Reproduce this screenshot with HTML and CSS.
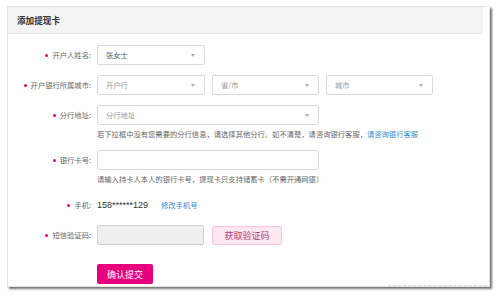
FILE: index.html
```html
<!DOCTYPE html>
<html lang="zh">
<head>
<meta charset="utf-8">
<title>添加提现卡</title>
<link rel="stylesheet" href="styles.css">
</head>
<body>
<div class="page">
  <div class="card">
    <div class="card-head">添加提现卡</div>
    <form class="form">
      <div class="row">
        <label class="label"><span class="req"></span>开户人姓名:</label>
        <div class="ctrl">
          <div class="select w108"><span class="val">张女士</span><span class="arrow"></span></div>
        </div>
      </div>
      <div class="row">
        <label class="label"><span class="req"></span>开户银行所属城市:</label>
        <div class="ctrl inline">
          <div class="select w108"><span class="ph">开户行</span><span class="arrow"></span></div>
          <div class="select w107"><span class="ph">省/市</span><span class="arrow"></span></div>
          <div class="select w107"><span class="ph">城市</span><span class="arrow"></span></div>
        </div>
      </div>
      <div class="row">
        <label class="label"><span class="req"></span>分行地址:</label>
        <div class="ctrl">
          <div class="select w222"><span class="ph">分行地址</span><span class="arrow"></span></div>
          <p class="hint">若下拉框中没有您需要的分行信息，请选择其他分行。如不清楚，请咨询银行客服，<a class="link">请咨询银行客服</a></p>
        </div>
      </div>
      <div class="row">
        <label class="label"><span class="req"></span>银行卡号:</label>
        <div class="ctrl">
          <div class="input w222"></div>
          <p class="hint">请输入持卡人本人的银行卡号，提现卡只支持储蓄卡（不需开通网银）</p>
        </div>
      </div>
      <div class="row">
        <label class="label"><span class="req"></span>手机:</label>
        <div class="ctrl inline">
          <span class="phone">158******129</span>
          <a class="link change">修改手机号</a>
        </div>
      </div>
      <div class="row">
        <label class="label"><span class="req"></span>短信验证码:</label>
        <div class="ctrl inline">
          <div class="input w107 disabled"></div>
          <button type="button" class="code-btn">获取验证码</button>
        </div>
      </div>
      <div class="row submit-row">
        <div class="label"></div>
        <div class="ctrl">
          <button type="button" class="submit">确认提交</button>
        </div>
      </div>
    </form>
    <div class="dash"></div>
  </div>
</div>
</body>
</html>
```

FILE: styles.css
```css
* { box-sizing: border-box; }
html, body { margin: 0; padding: 0; background: #fff; }
body {
  font-family: "Noto Sans CJK SC", "Liberation Sans", sans-serif;
  color: #555;
  width: 500px;
  height: 298px;
  overflow: hidden;
}
.page { padding: 6px 0 0 7px; }
.card {
  position: relative;
  width: 483px;
  height: 281px;
  border: 1px solid #e2e2e2;
  background: #fff;
  box-shadow: 2px 2px 2px rgba(0, 0, 0, 0.55);
}
.card-head {
  height: 27px;
  margin-right: 6px;
  background: #f3f3f3;
  border-bottom: 1px solid #e9e9e9;
  padding-left: 9px;
  font-size: 8.6px;
  font-weight: bold;
  color: #333;
  line-height: 26px;
}
.form { padding-top: 11px; }
.row { display: flex; align-items: flex-start; margin-bottom: 10px; }
.label {
  width: 83px;
  flex: none;
  height: 20px;
  line-height: 21px;
  text-align: right;
  font-size: 7.3px;
  color: #666;
  margin-right: 6px;
  white-space: nowrap;
}
.req {
  display: inline-block;
  width: 3px;
  height: 3px;
  border-radius: 50%;
  background: #e6007e;
  vertical-align: middle;
  margin-right: 4px;
  position: relative;
  top: -1px;
}
.ctrl { display: flex; flex-direction: column; }
.ctrl.inline { flex-direction: row; align-items: center; gap: 7px; height: 20px; }
.select, .input {
  height: 20px;
  border: 1px solid #d9d9d9;
  border-radius: 2px;
  background: #fff;
  display: flex;
  align-items: center;
  justify-content: space-between;
  padding: 0 7px 0 8px;
  font-size: 7.3px;
}
.w108 { width: 108px; }
.w107 { width: 107px; }
.w222 { width: 222px; }
.val { color: #555; }
.ph { color: #999; }
.arrow {
  width: 0;
  height: 0;
  border-left: 2.5px solid transparent;
  border-right: 2.5px solid transparent;
  border-top: 3px solid #aaa;
  margin-right: 2px;
}
.input.disabled { background: #efefef; border-color: #cfcfcf; }
.hint {
  margin: 4px 0 0;
  font-size: 7.3px;
  line-height: 11px;
  color: #666;
  white-space: nowrap;
}
.link { color: #2b8dd0; text-decoration: none; }
.phone {
  font-family: "Liberation Sans", sans-serif;
  font-size: 9px;
  color: #333;
}
.change { font-size: 7.3px; margin-left: 6px; }
.code-btn {
  width: 70px;
  height: 19px;
  margin-left: 1px;
  border: 1px solid #f5c6dc;
  border-radius: 2px;
  background: #fde8f1;
  color: #b33a80;
  font-family: inherit;
  font-size: 9px;
  padding: 0;
  line-height: 17px;
}
.submit-row { margin-top: 19px; }
.submit {
  width: 56px;
  height: 20px;
  border: none;
  border-radius: 2px;
  background: #e6007e;
  color: #fff;
  font-family: inherit;
  font-size: 9px;
  padding: 0;
}
.dash {
  position: absolute;
  left: 380px;
  right: 2px;
  bottom: 0;
  border-bottom: 1px dashed #ddd;
}
```
